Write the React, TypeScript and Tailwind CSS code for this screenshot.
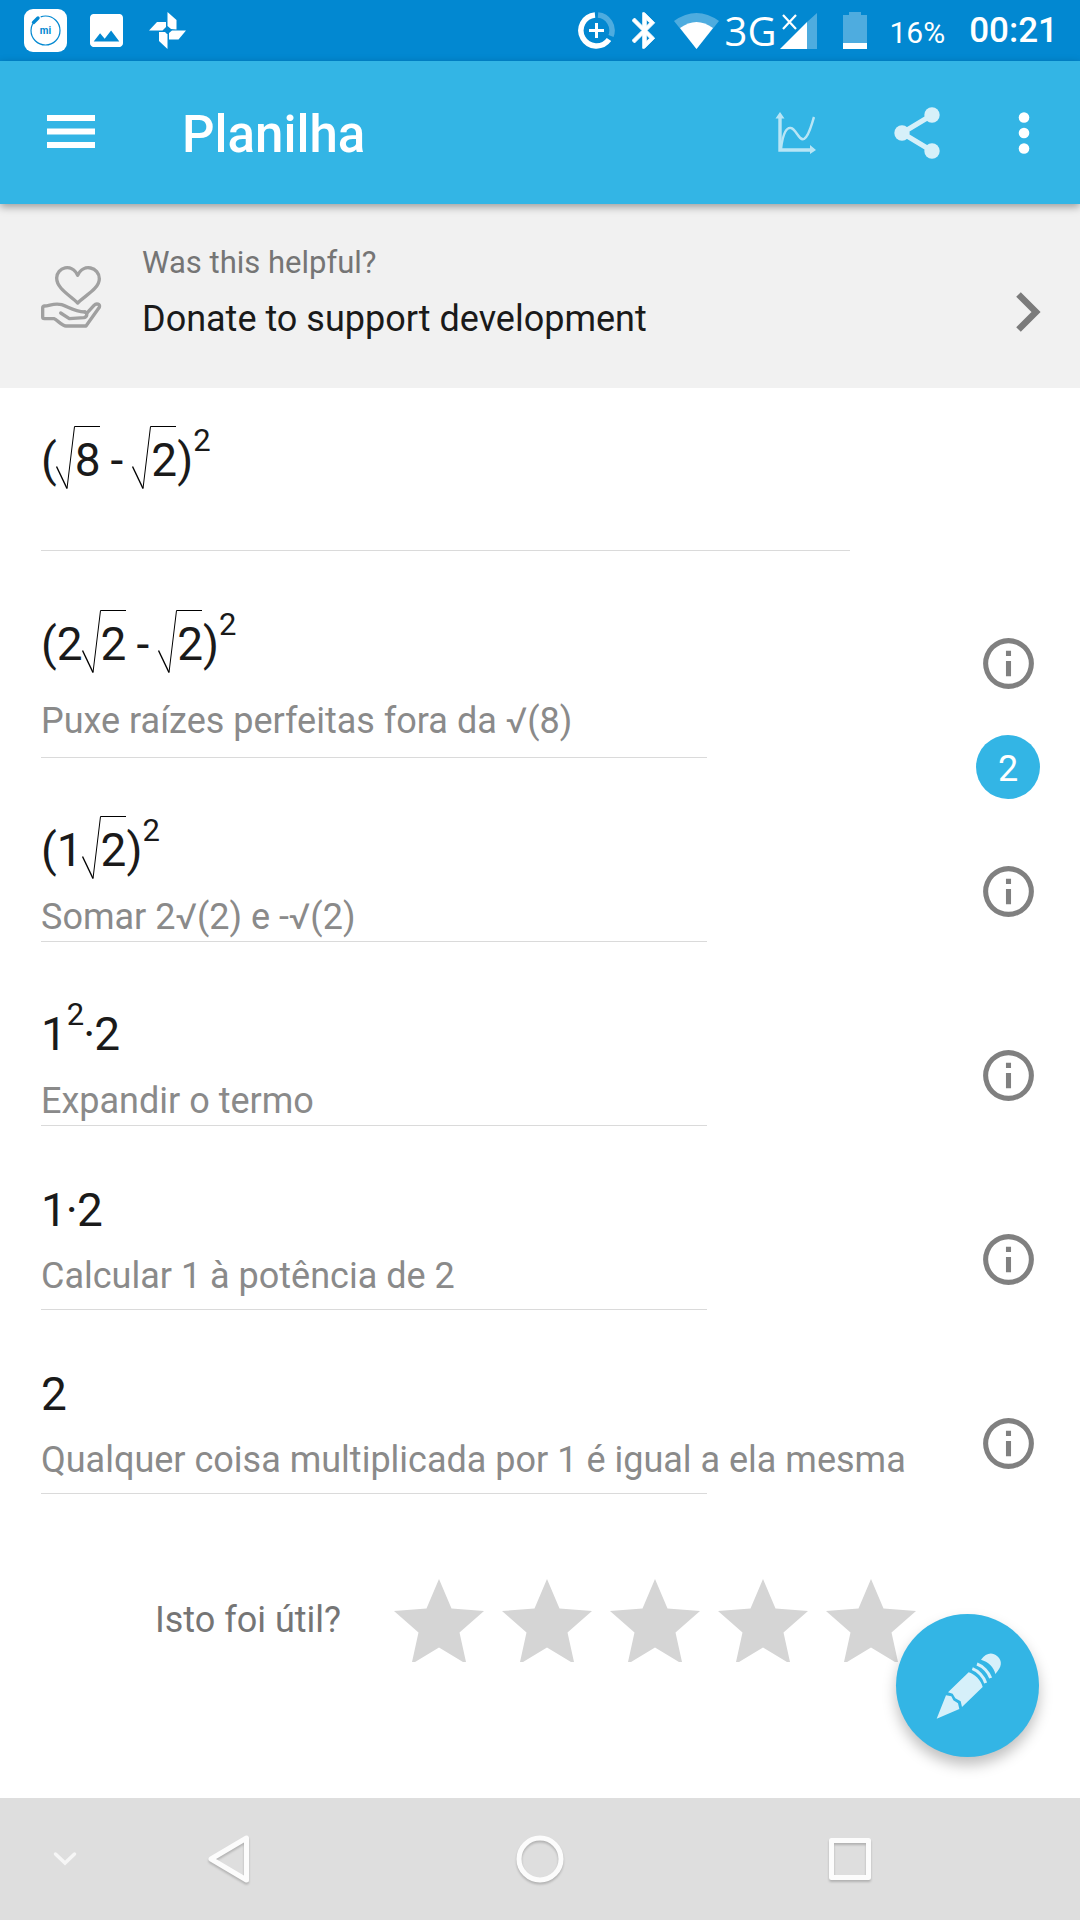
import type { ReactNode } from "react";

interface StepProps {
    formula: ReactNode;
    hint: string;
    topClass?: string;
    hintClass?: string;
    infoClass?: string;
    badge?: string;
}

function Root({ children }: { children: ReactNode }) {
    return (
        <>
            <svg
                viewBox="0 0 45 63"
                className="-mr-[26px] -ml-px inline h-[63px] w-[45px] align-[-13px]"
                fill="none"
                stroke="#000"
                aria-label="√"
            >
                <path d="M0.5 40.5 L11 62.5" strokeWidth="1.4" />
                <path d="M11 62.5 L18.5 0.5 H44" />
            </svg>
            {children}
        </>
    );
}

function Power({ children }: { children: ReactNode }) {
    return <span className="align-[25px] text-[31px] leading-none">{children}</span>;
}

function Minus() {
    return <span className="mx-2.5">-</span>;
}

function Times() {
    return <span className="-mx-px">·</span>;
}

function InfoButton() {
    return (
        <button aria-label="Info" className="block">
            <svg viewBox="0 0 24 24" className="size-[61px]" fill="#808080">
                <path d="M11 7h2v2h-2zM11 11h2v6h-2zM12 2a10 10 0 1 0 0 20a10 10 0 0 0 0-20zm0 18a8 8 0 1 1 0-16a8 8 0 0 1 0 16z" />
            </svg>
        </button>
    );
}

function Step({
    formula,
    hint,
    topClass = "pt-14",
    hintClass = "mt-2.5 mb-[3px]",
    infoClass = "pb-[19px]",
    badge,
}: StepProps) {
    return (
        <li className="relative pr-10 pl-[41px]">
            <div className="flex items-end justify-between">
                <div className={topClass}>
                    <p className="text-[46px] leading-[72px] whitespace-nowrap text-[#1a1a1a]">{formula}</p>
                    <p className={`text-[36px] leading-[42px] text-[#8a8a8a] ${hintClass}`}>{hint}</p>
                </div>
                <div className={`flex w-16 shrink-0 justify-center ${infoClass}`}>
                    <InfoButton />
                </div>
            </div>
            <div className="h-px w-2/3 bg-[#dadada]" />

            {badge && (
                <span className="absolute right-10 -bottom-[41px] z-10 flex size-16 items-center justify-center rounded-full bg-[#33b5e5] pt-1 text-[36px] text-white">
                    {badge}
                </span>
            )}
        </li>
    );
}

function StatusBar() {
    return (
        <div className="flex h-[61px] items-center justify-between bg-[#0288d1] pr-[22px] pl-6 text-white">
            <div className="flex items-center">
                <svg viewBox="0 0 43 43" className="size-[43px]" fill="none">
                    <rect width="43" height="43" rx="9" fill="#fff" />
                    <circle cx="21.5" cy="21.5" r="14.5" stroke="#0288d1" strokeWidth="1.2" strokeDasharray="80 11" strokeDashoffset="-63" />
                    <path d="M9.5 13.5L14 9" stroke="#0288d1" strokeWidth="3.4" strokeLinecap="round" />
                    <text x="21.5" y="25" fill="#0288d1" fontSize="10" fontWeight="700" textAnchor="middle">mi</text>
                </svg>
                <svg viewBox="3 3 18 18" className="ml-[23px] size-[33px]" fill="#fff">
                    <path d="M21 19V5c0-1.1-.9-2-2-2H5c-1.1 0-2 .9-2 2v14c0 1.1.9 2 2 2h14c1.1 0 2-.9 2-2zM8.5 13.5l2.5 3.01L14.5 12l4.5 6H5l3.5-4.5z" />
                </svg>
                <svg viewBox="0 0 37 37" className="ml-[26px] size-[37px]" fill="#fff">
                    <path d="M18.5 0L27.5 8V17.5L22 17L18.5 14Z" />
                    <path d="M37 18.5L29.5 27.5H20V21L23 18.5Z" />
                    <path d="M18.5 37L10 29V20H16L18.5 22.5Z" />
                    <path d="M0 18.5L8 10H17V15L13.5 18.5Z" />
                </svg>
            </div>

            <div className="flex items-center">
                <svg viewBox="0 0 37 37" className="size-[37px]" fill="none" strokeWidth="5.5">
                    <path d="M20 3A15.5 15.5 0 0 1 33 24" stroke="#fff" strokeOpacity=".3" />
                    <path d="M17 3A15.5 15.5 0 1 0 31 27.5" stroke="#fff" />
                    <path d="M18.5 11V26M11 18.5H26" stroke="#fff" strokeWidth="3" />
                </svg>
                <svg viewBox="5 2 14 20" className="ml-[17px] h-[37px] w-[25px]" fill="#fff" stroke="#fff" strokeWidth=".5">
                    <path d="M17.71 7.71L12 2h-1v7.59L6.41 5 5 6.41 10.59 12 5 17.59 6.41 19 11 14.41V22h1l5.71-5.71-4.3-4.29 4.3-4.29zM13 5.83l1.88 1.88L13 9.59V5.83zm1.88 10.46L13 18.17v-3.76l1.88 1.88z" />
                </svg>
                <svg viewBox="0 0 45 36" className="ml-[17px] h-9 w-[45px]" fill="#fff">
                    <path d="M0 8Q22.5-8 45 8L22.5 36Z" fillOpacity=".3" />
                    <path d="M6 15Q22.5 3 39 15L22.5 36Z" />
                </svg>
                <span className="ml-1.5 font-['Open_Sans',sans-serif] text-[40px] leading-none">3G</span>
                <svg viewBox="0 0 37 36" className="ml-1 h-9 w-[37px]" fill="#fff">
                    <path d="M27 9L37 0V36H27Z" fillOpacity=".3" />
                    <path d="M0 36L27 9V36Z" />
                    <path d="M3 2L16 16M16 2L3 16" stroke="#fff" strokeWidth="2.2" />
                </svg>
                <svg viewBox="0 0 24 37" className="ml-[26px] h-[37px] w-6" fill="#fff">
                    <path d="M0 3H6V0H18V3H24V31H0Z" fillOpacity=".3" />
                    <path d="M0 31H24V37H0Z" />
                </svg>
                <span className="ml-[22px] pt-1 text-[30px]">16%</span>
                <span className="ml-6 pt-0.5 text-[35px] font-medium">00:21</span>
            </div>
        </div>
    );
}

function AppBar() {
    return (
        <header className="relative z-10 flex h-[143px] items-center bg-[#33b5e5] pr-2.5 pl-[41px] text-white shadow-[0_3px_8px_rgba(0,0,0,0.35)]">
            <button aria-label="Menu">
                <svg viewBox="0 0 61 61" className="size-[61px]" fill="#fff">
                    <path d="M6 13H54V19H6zM6 26.5H54V32.5H6zM6 40H54V46H6z" />
                </svg>
            </button>
            <h1 className="ml-20 pt-1.5 text-[51px] font-medium">Planilha</h1>

            <div className="ml-auto flex items-center">
                <button aria-label="Gráfico" className="flex w-[122px] justify-center">
                    <svg viewBox="0 0 41 42" className="h-[42px] w-[41px] opacity-65" fill="none" stroke="#fff">
                        <path d="M5 5V38H36" strokeWidth="3.4" />
                        <path d="M6 37C8 20 12 15 16 16C21 17 24 29 29 27C34 24 36 14 39 5" strokeWidth="2.4" />
                        <path d="M0.5 6.5L5 0L9.5 6.5ZM35 33L41 38L35 42Z" fill="#fff" stroke="none" />
                    </svg>
                </button>
                <button aria-label="Compartilhar" className="flex w-[122px] justify-center">
                    <svg viewBox="0 0 46 52" className="h-[52px] w-[46px] opacity-80" fill="#fff">
                        <path d="M38 8L8 26L38 44" fill="none" stroke="#fff" strokeWidth="5" />
                        <circle cx="38" cy="8" r="7.7" />
                        <circle cx="8" cy="26" r="7.7" />
                        <circle cx="38" cy="44" r="7.7" />
                    </svg>
                </button>
                <button aria-label="Mais opções" className="flex w-[92px] justify-center">
                    <svg viewBox="0 0 12 42" className="h-[42px] w-3" fill="#fff">
                        <circle cx="6" cy="5.5" r="5.3" />
                        <circle cx="6" cy="21" r="5.3" />
                        <circle cx="6" cy="36.5" r="5.3" />
                    </svg>
                </button>
            </div>
        </header>
    );
}

function DonateBanner() {
    return (
        <a href="#donate" className="flex items-center bg-[#f1f1f1] pt-[41px] pr-[39px] pb-12 pl-[30px]">
            <svg
                viewBox="0 0 240 240"
                className="mt-1.5 size-20"
                fill="none"
                stroke="#a0a0a0"
                strokeWidth="10"
                strokeLinejoin="round"
                strokeLinecap="round"
            >
                <path d="M143 141C122 119 80 98 80 66C80 34 126 20 143 58C160 20 208 34 208 68C208 98 164 119 143 141Z" />
                <path d="M165 168C130 166 115 152 95 146C73 140 60 149 43 150Q38 151 38 156V183Q38 188 43 188H72C80 190 96 210 108 210H168L208 154C212 144 199 141 192 148L170 172" />
                <path d="M92 171L118 188L162 185C172 182 173 172 165 168" />
            </svg>
            <div className="ml-8">
                <p className="text-[31px] leading-9 text-[#757575]">Was this helpful?</p>
                <p className="mt-[17px] text-[36px] leading-[42px] text-[#1a1a1a]">Donate to support development</p>
            </div>
            <svg viewBox="0 0 25 40" className="mt-[38px] ml-auto h-10 w-[25px]" fill="none" stroke="#7b7b7b" strokeWidth="6.5">
                <path d="M2.5 2.5L20 20L2.5 37.5" />
            </svg>
        </a>
    );
}

function Rating() {
    return (
        <div className="flex items-center pt-[85px] pl-[155px]">
            <span className="pb-0.5 text-[36px] text-[#757575]">Isto foi útil?</span>
            <div className="ml-auto flex gap-[18px] pr-[164px]">
                {[1, 2, 3, 4, 5].map((n) => (
                    <button key={n} aria-label={`${n}`}>
                        <svg viewBox="0 0 90 83" className="h-[83px] w-[90px]" fill="#d5d5d5">
                            <path d="M45 0L57.5 29.5L90 32L65.5 53.5L72 83H69L45 68.5L21 83H18L24.5 53.5L0 32L32.5 29.5Z" />
                        </svg>
                    </button>
                ))}
            </div>
        </div>
    );
}

function NavBar() {
    return (
        <nav className="flex h-[122px] items-center bg-[#dedede]">
            <button aria-label="Ocultar" className="flex w-[12%] justify-center">
                <svg viewBox="0 0 24 16" className="h-4 w-6" fill="none" stroke="#f6f6f6" strokeWidth="3.5" strokeLinecap="round">
                    <path d="M2.5 3L12 12L21.5 3" />
                </svg>
            </button>
            <button aria-label="Voltar" className="flex w-[18.5%] justify-center">
                <svg viewBox="0 0 48 52" className="h-[52px] w-12 drop-shadow-[0_2px_1px_rgba(0,0,0,0.2)]" fill="none" stroke="#fcfcfc" strokeWidth="5" strokeLinejoin="round">
                    <path d="M41.5 5V47L6 26Z" />
                </svg>
            </button>
            <button aria-label="Início" className="flex w-[39%] justify-center">
                <svg viewBox="0 0 52 52" className="size-[52px] drop-shadow-[0_2px_1px_rgba(0,0,0,0.2)]" fill="none" stroke="#fcfcfc" strokeWidth="5">
                    <circle cx="26" cy="26" r="21" />
                </svg>
            </button>
            <button aria-label="Recentes" className="flex w-[18.5%] justify-center">
                <svg viewBox="0 0 52 52" className="size-[52px] drop-shadow-[0_2px_1px_rgba(0,0,0,0.2)]" fill="none" stroke="#fcfcfc" strokeWidth="5" strokeLinejoin="round">
                    <rect x="7.5" y="7.5" width="37" height="37" />
                </svg>
            </button>
        </nav>
    );
}

export default function App() {
    return (
        <div className="flex min-h-screen flex-col bg-white font-[Roboto,sans-serif]">
            <StatusBar />
            <AppBar />
            <DonateBanner />

            <main className="relative flex-1">
                <div className="pt-9 pr-10 pl-[41px]">
                    <p className="text-[46px] leading-[72px] whitespace-nowrap text-[#1a1a1a]">
                        (<Root>8</Root><Minus /><Root>2</Root>)<Power>2</Power>
                    </p>
                    <div className="mt-[54px] h-px w-[81%] bg-[#dadada]" />
                </div>

                <ol>
                    <Step
                        formula={<>(2<Root>2</Root><Minus /><Root>2</Root>)<Power>2</Power></>}
                        hint="Puxe raízes perfeitas fora da √(8)"
                        topClass="pt-[57px]"
                        hintClass="mt-5 mb-[15px]"
                        infoClass="pb-[63px]"
                        badge="2"
                    />
                    <Step
                        formula={<>(1<Root>2</Root>)<Power>2</Power></>}
                        hint="Somar 2√(2) e -√(2)"
                    />
                    <Step
                        formula={<>1<Power>2</Power><Times />2</>}
                        hint="Expandir o termo"
                    />
                    <Step
                        formula={<>1<Times />2</>}
                        hint="Calcular 1 à potência de 2"
                        topClass="pt-12"
                        hintClass="mt-[9px] mb-3"
                    />
                    <Step
                        formula="2"
                        hint="Qualquer coisa multiplicada por 1 é igual a ela mesma"
                        topClass="pt-12"
                        hintClass="mt-[9px] mb-3"
                    />
                </ol>

                <Rating />

                <button
                    aria-label="Editar"
                    className="absolute right-[41px] bottom-[41px] flex size-[143px] items-center justify-center rounded-full bg-[#33b5e5] shadow-[0_8px_14px_rgba(0,0,0,0.25)]"
                >
                    <svg viewBox="-8 2 300 270" className="h-[90px] w-[100px]" fill="#d6f0fa">
                        <path d="M48 235L76 165L92 168L98 180L112 189L116 206Z" />
                        <path d="M82 156L144 96C160 100 182 120 186 140L124 200L120 183L104 174L96 160Z" />
                        <path d="M155 85C172 91 190 110 195 128M169 71C188 78 204 96 210 113" fill="none" stroke="#d6f0fa" strokeWidth="9" />
                        <path d="M181 58C196 38 214 34 230 48C246 62 244 80 224 101C220 80 202 64 181 58Z" />
                    </svg>
                </button>
            </main>

            <NavBar />
        </div>
    );
}
